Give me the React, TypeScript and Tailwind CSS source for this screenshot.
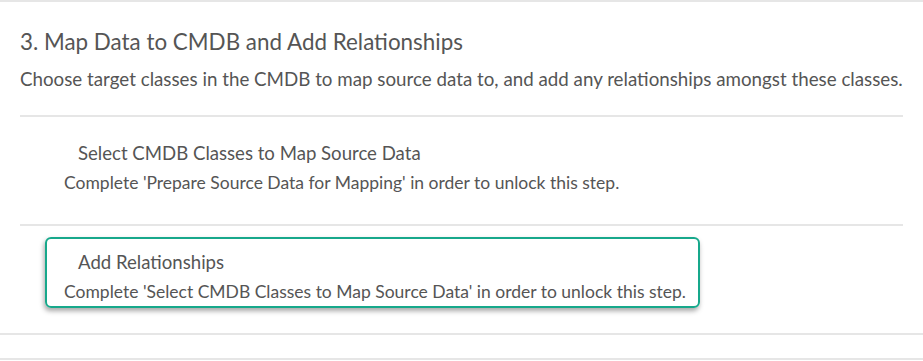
const steps = [
  {
    title: 'Select CMDB Classes to Map Source Data',
    hint: "Complete 'Prepare Source Data for Mapping' in order to unlock this step.",
    active: false,
  },
  {
    title: 'Add Relationships',
    hint: "Complete 'Select CMDB Classes to Map Source Data' in order to unlock this step.",
    active: true,
  },
];

const StepCard = ({ title, hint, active }: { title: string; hint: string; active: boolean }) => (
  <div
    className={
      'ml-[25px] w-[655px] rounded-md border-2 pt-[11px] pb-[3px] pl-[17px] ' +
      (active
        ? 'border-[#17a88b] shadow-[-1px_3px_5px_rgba(0,0,0,0.35)]'
        : 'border-transparent')
    }
  >
    <div className="pl-[14px] text-[18.6px] leading-[24px] text-[#555]">{title}</div>
    <div className="mt-[7px] text-[17.5px] leading-[22px] text-[#555]">{hint}</div>
  </div>
);

export default function App() {
  return (
    <div className="h-[361px] w-[923px] bg-white font-['Lato',sans-serif]">
      <div className="border-t-2 border-[#e6e6e6] px-5 pt-[25px]">
        <h2 className="text-[22.4px] leading-[30px] text-[#555]">
          3. Map Data to CMDB and Add Relationships
        </h2>
        <p className="mt-[9px] text-[18.75px] leading-[26px] text-[#555]">
          Choose target classes in the CMDB to map source data to, and add any relationships amongst these classes.
        </p>
        <div className="mt-[23px]">
          {steps.map((s) => (
            <div key={s.title} className="border-t-2 border-[#e6e6e6] pt-[11px] pb-[25px]">
              <StepCard {...s} />
            </div>
          ))}
        </div>
      </div>
      <div className="h-[27px] border-y-2 border-[#e6e6e6]" />
    </div>
  );
}
